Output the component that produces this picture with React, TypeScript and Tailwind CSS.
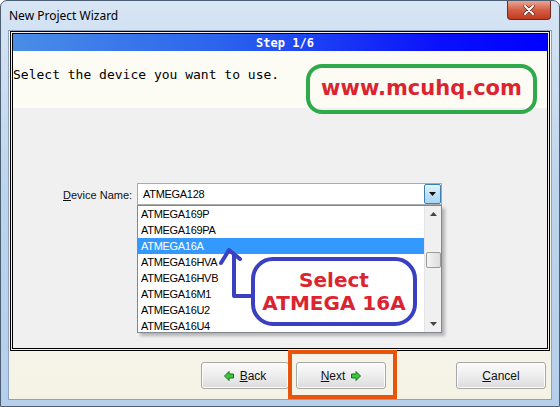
import React from "react";

const items = [
  "ATMEGA169P",
  "ATMEGA169PA",
  "ATMEGA16A",
  "ATMEGA16HVA",
  "ATMEGA16HVB",
  "ATMEGA16M1",
  "ATMEGA16U2",
  "ATMEGA16U4",
];

function GreenArrow({ dir }: { dir: "left" | "right" }) {
  return (
    <svg width="10" height="10" viewBox="0 0 10 10" style={{ transform: dir === "left" ? "scaleX(-1)" : undefined }}>
      <path d="M0.5 3 H5 V0.5 L9.5 5 L5 9.5 V7 H0.5 Z" fill="#3cc83c" stroke="#1e6e1e" strokeWidth="1" strokeLinejoin="round" />
    </svg>
  );
}

function Btn({ children, w }: { children: React.ReactNode; w: string }) {
  return (
    <div
      className={`${w} h-[27px] flex items-center justify-center gap-[6px] rounded-[3px] border border-[#a7a7a7] bg-gradient-to-b from-[#fbfbfb] via-[#ededed] to-[#dcdcdc] text-[12px] text-[#111] shadow-[inset_0_0_0_1px_#fcfcfc]`}
    >
      {children}
    </div>
  );
}

export default function App() {
  return (
    <div
      className="relative w-[560px] h-[407px] overflow-hidden rounded-t-[7px] border border-[#4c5e74] bg-gradient-to-b from-[#d7e5f4] via-[#bcd3ec] to-[#b6cfea]"
      style={{ fontFamily: '"Liberation Sans", Arial, sans-serif' }}
    >
      {/* Title bar */}
      <div className="h-[29px] flex items-center pl-[8px] text-[12px] text-black" style={{ fontFamily: '"Noto Sans", "Liberation Sans", sans-serif' }}>
        New Project Wizard
      </div>
      {/* close button */}
      <div className="absolute left-[506px] top-[0px] w-[44px] h-[19px] rounded-b-[4px] border border-[#6e2a20] border-t-0 bg-gradient-to-b from-[#e9a593] via-[#d35e45] to-[#c0391f] flex items-center justify-center">
        <svg width="12" height="10" viewBox="0 0 12 10">
          <path d="M2 1 L10 9 M10 1 L2 9" stroke="#5a2018" strokeWidth="3.2" strokeLinecap="round" />
          <path d="M2 1 L10 9 M10 1 L2 9" stroke="#ffffff" strokeWidth="2" strokeLinecap="round" />
        </svg>
      </div>

      {/* Client area */}
      <div className="mx-[7px] h-[370px] border border-[#8ea4bd] bg-gradient-to-b from-[#fbfaf3] to-[#f5f2e6] flex flex-col">
        {/* Panel */}
        <div className="mx-[1px] h-[320px] border-[3px] border-double border-black flex flex-col bg-[#f0f0f0]">
          <div
            className="h-[17px] flex items-center justify-center text-white text-[12px] font-bold pl-[10px]"
            style={{
              fontFamily: '"DejaVu Sans Mono", monospace',
              background: "linear-gradient(to right, #4a8ee6 0%, #2a62ee 40%, #0a10fc 80%, #0000ff 100%)",
            }}
          >
            Step 1/6
          </div>
          <div className="h-[57px] bg-[#fcfbf4] pl-0 pt-[16px] text-[13px] text-black leading-[16px]" style={{ fontFamily: '"DejaVu Sans Mono", monospace' }}>
            Select the device you want to use.
          </div>
          <div className="relative flex items-start pt-[75px]">
            <div className="w-[124px] pl-[50px] pt-[4px] text-[11px] text-[#111] whitespace-nowrap">
              <span className="underline">D</span>evice Name:
            </div>
            <div className="relative w-[305px] h-[22px] border border-[#aaaaaa] bg-white flex items-center">
              <span className="pl-[5px] text-[11px] tracking-[-0.3px] text-black">ATMEGA128</span>
              <div className="absolute right-[0px] top-[0px] w-[17px] h-[20px] border border-[#3c7fb1] rounded-[2px] bg-gradient-to-b from-[#e6f4fc] via-[#bfe2f8] to-[#a7d6f4] flex items-center justify-center">
                <svg width="7" height="4" viewBox="0 0 7 4">
                  <path d="M0 0 H7 L3.5 4 Z" fill="#111" />
                </svg>
              </div>
              {/* Dropdown list */}
              <div className="absolute left-[-1px] top-[21px] w-[305px] h-[128px] border border-[#828790] bg-white flex shadow-[3px_3px_3px_rgba(0,0,0,0.25)] z-10">
                <div className="flex-1 flex flex-col">
                  {items.map((t) => (
                    <div
                      key={t}
                      className={`h-[16px] leading-[16px] pl-[3px] text-[11px] tracking-[-0.3px] ${t === "ATMEGA16A" ? "bg-[#3399ff] text-white" : "text-black"}`}
                    >
                      {t}
                    </div>
                  ))}
                </div>
                <div className="w-[17px] bg-[#f0f0f0] border-l border-[#e4e4e4] flex flex-col items-center">
                  <div className="h-[16px] flex items-center justify-center">
                    <svg width="7" height="4" viewBox="0 0 7 4"><path d="M0 4 H7 L3.5 0 Z" fill="#444" /></svg>
                  </div>
                  <div className="mt-[30px] w-[15px] h-[16px] rounded-[2px] border border-[#9a9a9a] bg-gradient-to-r from-[#f4f4f4] to-[#dcdcdc]" />
                  <div className="flex-1" />
                  <div className="h-[16px] flex items-center justify-center">
                    <svg width="7" height="4" viewBox="0 0 7 4"><path d="M0 0 H7 L3.5 4 Z" fill="#444" /></svg>
                  </div>
                </div>
              </div>
            </div>
          </div>
        </div>
        {/* Button row */}
        <div className="flex pt-[11px] pl-[192px]">
          <Btn w="w-[88px]">
            <GreenArrow dir="left" />
            <span><span className="underline">B</span>ack</span>
          </Btn>
          <div className="w-[7px]" />
          <Btn w="w-[90px]">
            <span><span className="underline">N</span>ext</span>
            <GreenArrow dir="right" />
          </Btn>
          <div className="w-[70px]" />
          <Btn w="w-[90px]">
            <span><span className="underline">C</span>ancel</span>
          </Btn>
        </div>
      </div>

      {/* Annotations */}
      <div
        className="absolute left-[305px] top-[63px] w-[231px] h-[50px] rounded-[16px] border-[4px] border-[#2eaa4a] flex items-center justify-center text-[21px] font-bold text-[#dc2430]"
        style={{ fontFamily: '"DejaVu Sans", Verdana, sans-serif' }}
      >
        www.mcuhq.com
      </div>
      <div
        className="absolute left-[250px] top-[256px] w-[166px] h-[69px] rounded-[22px] border-[4px] border-[#3a40c0] bg-white flex flex-col items-center justify-center text-[20px] leading-[23px] font-bold text-[#dc2430] z-20"
        style={{ fontFamily: '"DejaVu Sans", Verdana, sans-serif' }}
      >
        <div>Select</div>
        <div>ATMEGA 16A</div>
      </div>
      <svg className="absolute left-[212px] top-[244px] z-20" width="44" height="56" viewBox="0 0 44 56">
        <path d="M40 51 H21 V9" fill="none" stroke="#3a40c0" strokeWidth="4" strokeLinejoin="round" />
        <path d="M8 18 L16 5 L27 14" fill="none" stroke="#3a40c0" strokeWidth="4" strokeLinejoin="round" strokeLinecap="round" />
      </svg>
      <div className="absolute left-[287px] top-[349px] w-[109px] h-[49px] border-[4px] border-[#e8540a] z-20" />
    </div>
  );
}
